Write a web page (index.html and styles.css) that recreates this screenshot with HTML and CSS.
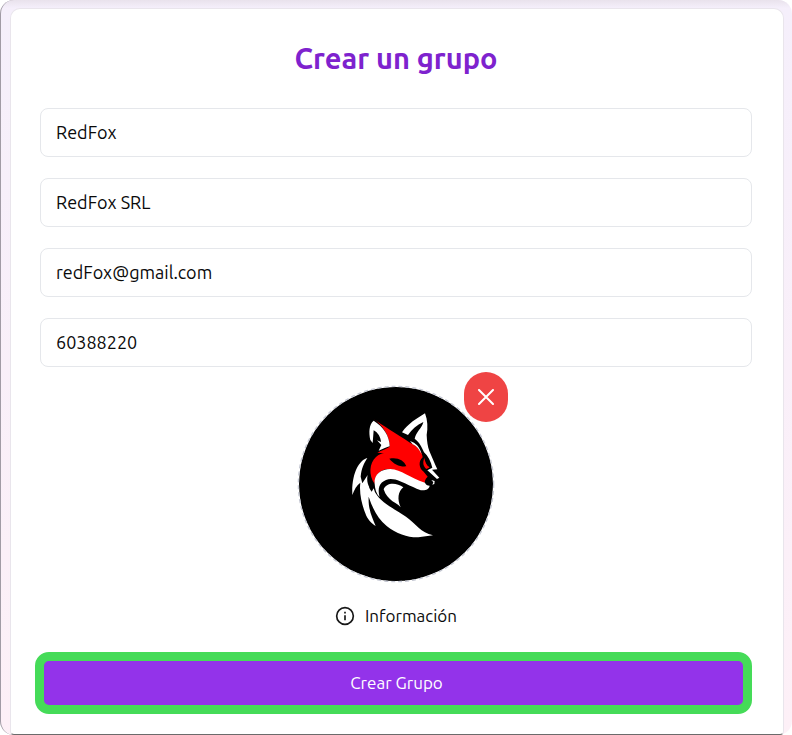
FILE: index.html
```html
<!DOCTYPE html>
<html lang="es">
<head>
<meta charset="utf-8">
<meta name="viewport" content="width=device-width, initial-scale=1">
<title>Crear un grupo</title>
<link rel="stylesheet" href="styles.css">
</head>
<body>
<main class="page">
  <form class="card">
    <h1 class="title">Crear un grupo</h1>
    <div class="fields">
      <input class="field" type="text" aria-label="Nombre corto" value="RedFox">
      <input class="field" type="text" aria-label="Nombre largo" value="RedFox SRL">
      <input class="field" type="email" aria-label="Correo" value="redFox@gmail.com">
      <input class="field" type="tel" aria-label="Teléfono" value="60388220">
    </div>
    <div class="logo">
      <svg class="logo-image" viewBox="24 63 588 588" role="img" aria-label="Logo">
        <circle cx="318" cy="357" r="291" fill="#000"/>
        <circle cx="318" cy="357" r="293" fill="none" stroke="#c4c7d2" stroke-width="4" stroke-dasharray="12 9"/>
        <g transform="translate(150 105)" fill="#fff">
          <path d="M82 174C58 180 34 220 37 285C43 268 50 256 61 248C57 280 66 315 76 340C82 358 95 371 107 378C95 350 84 325 86 290C98 325 112 355 140 378C170 402 205 413 235 412L279 406C242 397 228 372 198 350C165 327 125 312 105 277L101 265L95 275C87 265 86 258 88 262C82 250 80 238 83 225L67 250L62 230C64 205 72 190 82 174Z"/>
          <path d="M102 58C125 75 166 99 210 128C234 139 246 155 248 172C234 184 237 206 251 215L263 230C255 237 253 245 254 253C232 246 218 238 200 228C170 208 145 203 125 212C108 222 104 235 104 252C85 225 88 189 108 171C117 163 124 161 132 160L112 158C126 151 139 146 149 140C150 105 125 75 102 58Z" fill="red"/>
          <path d="M101 62C87 73 86 97 91 120L98 129L101 91C114 98 122 111 123 126L111 121L124 135L116 152C130 146 140 142 149 139C149 108 130 80 101 62Z"/>
          <path d="M148 176C171 171 191 179 199 199C180 201 161 193 148 176Z" fill="#000"/>
          <path d="M186 97C205 70 230 56 255 40C263 60 264 84 260 105C261 125 263 140 268 153L286 195L292 208L276 209L298 233L291 237L262 211L277 203C273 185 264 168 252 157C245 140 239 128 224 116C228 95 246 85 250 66C230 75 216 88 204 105Z"/>
          <path d="M210 123L222 128C235 137 241 147 245 163C236 146 230 138 218 133Z"/>
          <path d="M253 174C247 188 250 201 260 207L269 202C259 196 256 187 253 174Z" fill="red"/>
          <path d="M104 252C100 222 126 207 151 207C185 209 207 233 255 248C257 254 262 257 269 257C268 266 257 272 247 271C235 270 226 263 210 257C184 246 160 231 138 240C118 248 112 264 119 292C108 280 105 266 104 252Z"/>
          <path d="M131 268C138 247 169 246 190 262C174 275 171 297 182 322C171 308 142 303 131 268Z"/>
          <path d="M274 240L284 243L283 252L277 254L280 247Z"/>
        </g>
      </svg>
      <button class="remove" type="button" aria-label="Quitar logo">
        <svg class="remove-icon" viewBox="0 0 16 16" aria-hidden="true"><path d="M1 1l14 14M15 1L1 15"/></svg>
      </button>
    </div>
    <button class="info" type="button">
      <svg class="info-icon" viewBox="0 0 24 24" aria-hidden="true">
        <circle cx="12" cy="12" r="10"/><path d="M12 11v6M12 7v2"/>
      </svg>
      <span>Información</span>
    </button>
    <button class="submit" type="submit">Crear Grupo</button>
  </form>
</main>
</body>
</html>
```
FILE: styles.css
```css
* {
  box-sizing: border-box;
}

body {
  margin: 0;
  background: #fff;
  color: #0a0a0a;
  font: 18px/24px Ubuntu, "Noto Sans", sans-serif;
}

.page {
  min-height: 100vh;
  padding: 8px 8px 0 9px;
  border-left: 1px solid #a19ba5;
  border-radius: 14px;
  background: linear-gradient(#e9e2ec, transparent 8px), linear-gradient(#f5effb, #fdf0f7);
}

.card {
  display: flex;
  flex-direction: column;
  align-items: center;
  min-height: calc(100vh - 8px);
  padding: 31px 31px 20px 29px;
  border: 1px solid #e9e5ec;
  border-bottom-color: #6b6b6b;
  border-radius: 10px 10px 4px 4px;
  background: #fff;
}

.title {
  margin: 0 0 32px;
  color: #7e22ce;
  font-size: 29px;
  line-height: 36px;
}

.fields {
  display: grid;
  gap: 21px;
  width: 100%;
}

.field {
  width: 100%;
  height: 49px;
  padding: 0 15px 2px;
  border: 1px solid #e5e7eb;
  border-radius: 8px;
  background: #fff;
  color: inherit;
  font: inherit;
}

.logo {
  position: relative;
  width: 196px;
  height: 196px;
  margin-top: 19px;
}

.logo-image {
  display: block;
  width: 100%;
  height: 100%;
  overflow: visible;
}

.remove {
  position: absolute;
  top: -14px;
  right: -14px;
  display: grid;
  place-items: center;
  width: 44px;
  height: 50px;
  padding: 0;
  border: 0;
  border-radius: 22px;
  background: #ef4444;
}

.remove-icon {
  width: 16px;
  height: 16px;
  fill: none;
  stroke: #fff;
  stroke-width: 2;
  stroke-linecap: round;
}

.info {
  display: flex;
  align-items: center;
  gap: 10px;
  margin-top: 22px;
  padding: 0;
  border: 0;
  background: none;
  color: inherit;
  font: inherit;
  font-size: 17px;
}

.info-icon {
  width: 20px;
  height: 20px;
  fill: none;
  stroke: #171717;
  stroke-width: 2;
}

.submit {
  align-self: stretch;
  height: 62px;
  margin: 24px 0 0 -5px;
  padding: 0 0 0 6px;
  border: 9px solid #45db58;
  border-radius: 14px;
  background: #9333ea;
  color: #fff;
  font: inherit;
  font-size: 17px;
}
```
